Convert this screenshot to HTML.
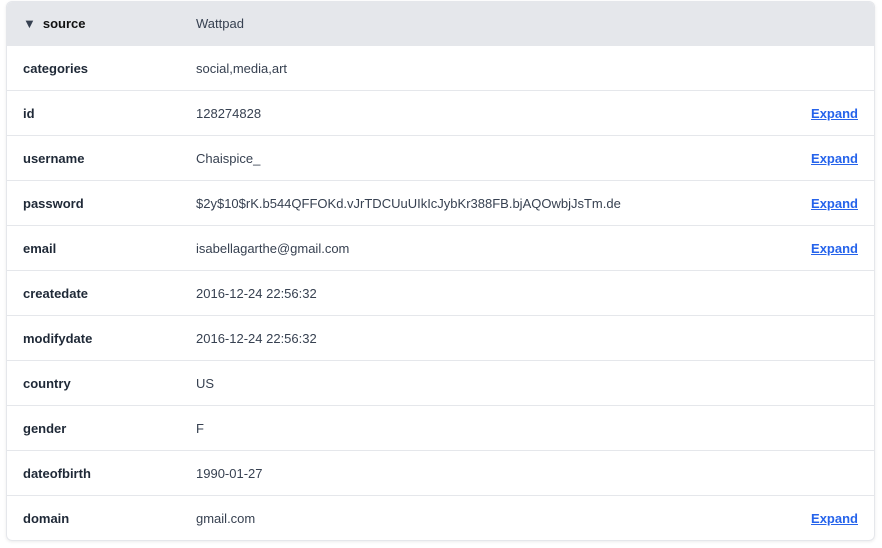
<!DOCTYPE html><html><head><style>
body{margin:0;background:#fff;font-family:"Liberation Sans",sans-serif;font-size:13px;color:#374151}
.card{position:absolute;left:6px;top:1px;width:867px;border:1px solid #e5e7eb;border-radius:6px;overflow:hidden;box-shadow:0 1px 3px rgba(0,0,0,.08)}
.row{height:44px;border-top:1px solid #e5e7eb;position:relative;line-height:46px}
.row:first-child{border-top:none;background:#e5e7eb;height:44px;line-height:44px}
.row:nth-child(2){border-top:none}
.k{position:absolute;left:16px;font-weight:bold;color:#1f2937}
.v{position:absolute;left:189px;color:#374151}
.e{position:absolute;right:16px;color:#2563eb;text-decoration:underline;font-weight:bold}
.tri{display:inline-block;font-size:13px;margin-right:7px;color:#374151}
</style></head><body><div class="card">
<div class="row"><span class="k" style="color:#111"><span class="tri">▼</span>source</span><span class="v">Wattpad</span></div>
<div class="row"><span class="k">categories</span><span class="v">social,media,art</span></div>
<div class="row"><span class="k">id</span><span class="v">128274828</span><span class="e">Expand</span></div>
<div class="row"><span class="k">username</span><span class="v">Chaispice_</span><span class="e">Expand</span></div>
<div class="row"><span class="k">password</span><span class="v">$2y$10$rK.b544QFFOKd.vJrTDCUuUIkIcJybKr388FB.bjAQOwbjJsTm.de</span><span class="e">Expand</span></div>
<div class="row"><span class="k">email</span><span class="v">isabellagarthe@gmail.com</span><span class="e">Expand</span></div>
<div class="row"><span class="k">createdate</span><span class="v">2016-12-24 22:56:32</span></div>
<div class="row"><span class="k">modifydate</span><span class="v">2016-12-24 22:56:32</span></div>
<div class="row"><span class="k">country</span><span class="v">US</span></div>
<div class="row"><span class="k">gender</span><span class="v">F</span></div>
<div class="row"><span class="k">dateofbirth</span><span class="v">1990-01-27</span></div>
<div class="row"><span class="k">domain</span><span class="v">gmail.com</span><span class="e">Expand</span></div>
</div></body></html>
